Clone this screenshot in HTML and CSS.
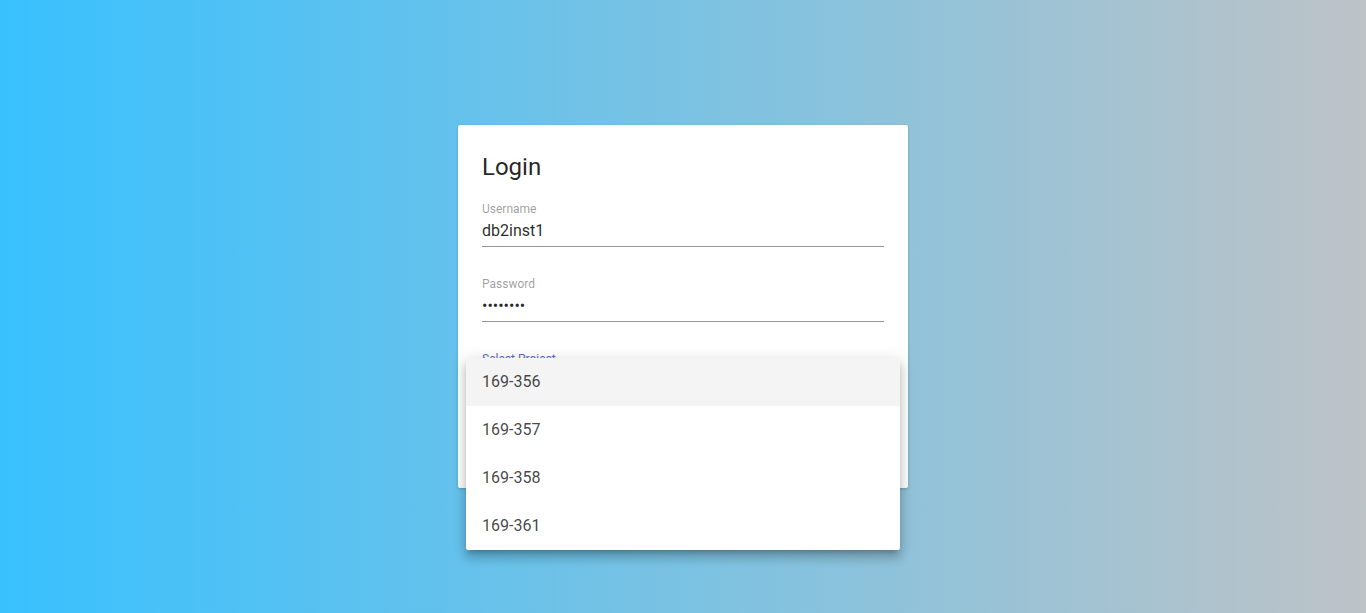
FILE: index.html
```html
<!DOCTYPE html>
<html>
<head>
<meta charset="utf-8">
<link rel="stylesheet" href="styles.css">
</head>
<body>
<main class="page">
  <section class="card">
    <h2 class="title">Login</h2>
    <div class="field">
      <label class="label">Username</label>
      <div class="value">db2inst1</div>
    </div>
    <div class="field">
      <label class="label">Password</label>
      <div class="value dots">&#8226;&#8226;&#8226;&#8226;&#8226;&#8226;&#8226;&#8226;</div>
    </div>
    <div class="field">
      <label class="label focused">Select Project</label>
      <div class="value"></div>
    </div>
    <ul class="menu">
      <li class="item active">169-356</li>
      <li class="item">169-357</li>
      <li class="item">169-358</li>
      <li class="item">169-361</li>
    </ul>
  </section>
</main>
</body>
</html>
```
FILE: styles.css
```css
html, body {
  margin: 0;
  padding: 0;
  height: 100%;
}
body {
  font-family: Roboto, "Liberation Sans", sans-serif;
  background: linear-gradient(to right, #38c1fe, #bdc3c7);
}
.page {
  height: 100%;
  display: flex;
  align-items: center;
  justify-content: center;
}
.card {
  position: relative;
  box-sizing: border-box;
  width: 450px;
  height: 363px;
  background: #fff;
  border-radius: 2px;
  padding: 24px;
  box-shadow: 0 1px 3px rgba(0,0,0,.2);
}
.title {
  margin: 2px 0 18px;
  font-size: 24px;
  line-height: 32px;
  font-weight: 400;
  color: rgba(0,0,0,.87);
}
.field {
  margin-bottom: 29px;
}
.label {
  display: block;
  font-size: 12px;
  line-height: 16px;
  color: rgba(0,0,0,.4);
}
.label.focused {
  color: #5c6bc0;
}
.value {
  margin-top: 2px;
  height: 24px;
  font-size: 16px;
  line-height: 24px;
  color: rgba(0,0,0,.85);
  padding-bottom: 3px;
  border-bottom: 1px solid #949494;
}
.dots {
  font-size: 16px;
}
.menu {
  position: absolute;
  left: 8px;
  top: 233px;
  width: 434px;
  margin: 0;
  padding: 0;
  list-style: none;
  background: #fff;
  border-radius: 2px;
  box-shadow: 0 5px 5px -3px rgba(0,0,0,.2), 0 8px 10px 1px rgba(0,0,0,.14), 0 3px 14px 2px rgba(0,0,0,.12);
}
.item {
  height: 48px;
  line-height: 48px;
  padding: 0 16px;
  font-size: 16px;
  color: rgba(0,0,0,.74);
}
.item.active {
  background: #f4f4f4;
}
```
